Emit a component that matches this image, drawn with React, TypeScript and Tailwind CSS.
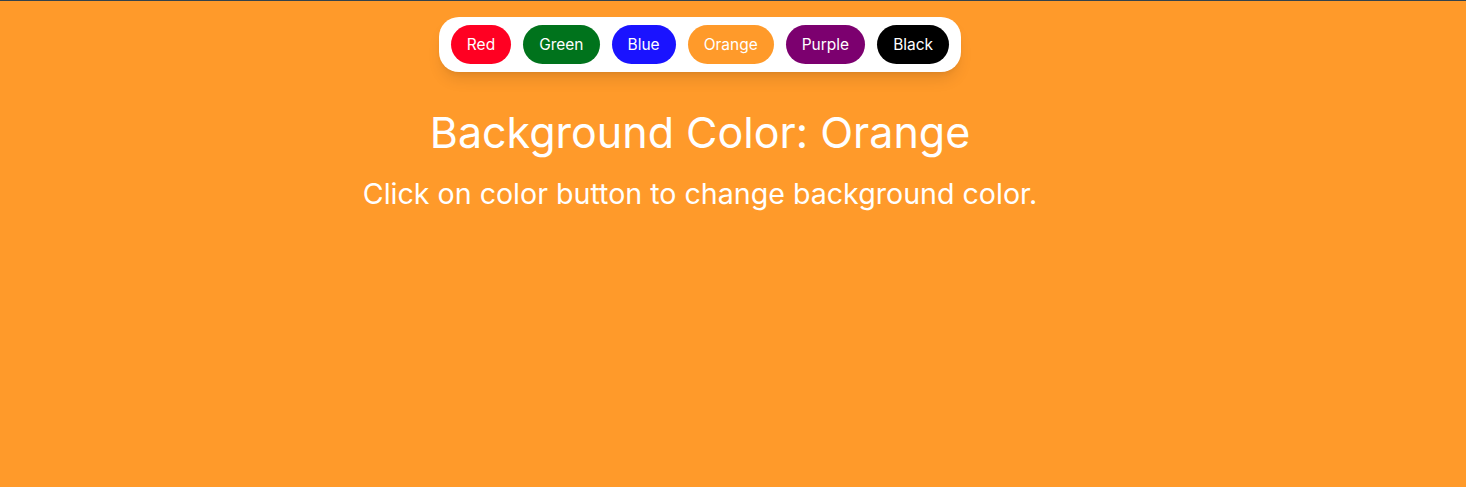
import { useState } from "react";

const colors = [
  { name: "Red", bg: "bg-[#ff0022]" },
  { name: "Green", bg: "bg-[#00731c]" },
  { name: "Blue", bg: "bg-[#1a13ff]" },
  { name: "Orange", bg: "bg-[#ff9a2a]" },
  { name: "Purple", bg: "bg-[#7c006f]" },
  { name: "Black", bg: "bg-black" },
];

const pageBg: Record<string, string> = {
  Red: "bg-[#ff0022]",
  Green: "bg-[#00731c]",
  Blue: "bg-[#1a13ff]",
  Orange: "bg-[#ff9a2a]",
  Purple: "bg-[#7c006f]",
  Black: "bg-black",
};

export default function App() {
  const [color, setColor] = useState("Orange");

  return (
    <div
      className={`min-h-[487px] w-full border-t border-[#34434c] ${pageBg[color]} font-['Inter',sans-serif] text-white`}
    >
      <div className="flex w-[1400px] flex-col items-center">
        <div className="mt-4 flex gap-3 rounded-[20px] bg-white px-3 py-2 shadow-lg">
          {colors.map((c) => (
            <button
              key={c.name}
              onClick={() => setColor(c.name)}
              className={`${c.bg} rounded-full px-4 pt-[8px] pb-[7px] text-[15.5px] leading-6 text-white`}
            >
              {c.name}
            </button>
          ))}
        </div>
        <h1 className="mt-[34px] text-[43px] leading-[52px]">Background Color: {color}</h1>
        <p className="mt-[18px] text-[28.6px] leading-[36px]">
          Click on color button to change background color.
        </p>
      </div>
    </div>
  );
}
